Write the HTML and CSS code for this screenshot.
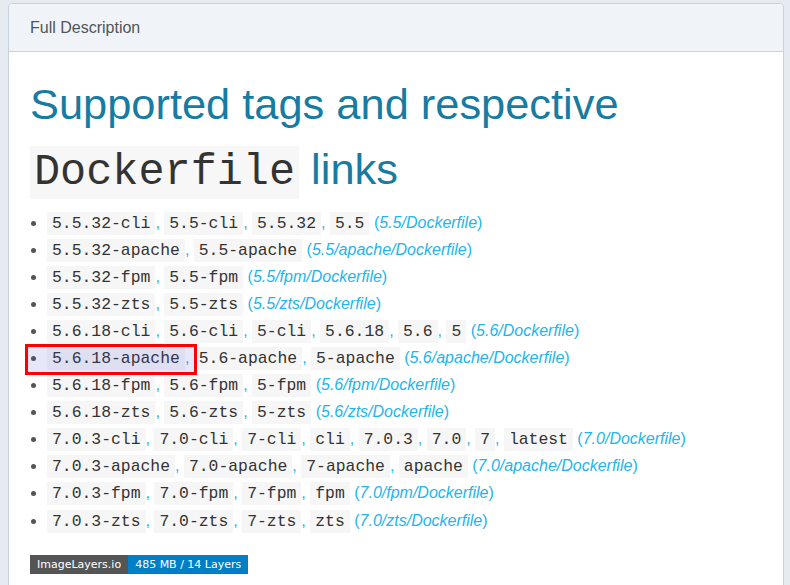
FILE: index.html
```html
<!DOCTYPE html>
<html>
<head>
<meta charset="utf-8">
<link rel="stylesheet" href="styles.css">
</head>
<body>
<div class="panel">
  <div class="panel-head">Full Description</div>
  <div class="panel-body">
    <h1 class="title">Supported tags and respective <code class="title-code">Dockerfile</code> links</h1>
    <ul class="tags">
      <li><a class="tag-link"><code>5.5.32-cli</code>, <code>5.5-cli</code>, <code>5.5.32</code>, <code>5.5</code> (<em>5.5/Dockerfile</em>)</a></li>
      <li><a class="tag-link"><code>5.5.32-apache</code>, <code>5.5-apache</code> (<em>5.5/apache/Dockerfile</em>)</a></li>
      <li><a class="tag-link"><code>5.5.32-fpm</code>, <code>5.5-fpm</code> (<em>5.5/fpm/Dockerfile</em>)</a></li>
      <li><a class="tag-link"><code>5.5.32-zts</code>, <code>5.5-zts</code> (<em>5.5/zts/Dockerfile</em>)</a></li>
      <li><a class="tag-link"><code>5.6.18-cli</code>, <code>5.6-cli</code>, <code>5-cli</code>, <code>5.6.18</code>, <code>5.6</code>, <code>5</code> (<em>5.6/Dockerfile</em>)</a></li>
      <li class="picked"><span class="pick-box"></span><a class="tag-link"><code>5.6.18-apache</code>, <code>5.6-apache</code>, <code>5-apache</code> (<em>5.6/apache/Dockerfile</em>)</a></li>
      <li><a class="tag-link"><code>5.6.18-fpm</code>, <code>5.6-fpm</code>, <code>5-fpm</code> (<em>5.6/fpm/Dockerfile</em>)</a></li>
      <li><a class="tag-link"><code>5.6.18-zts</code>, <code>5.6-zts</code>, <code>5-zts</code> (<em>5.6/zts/Dockerfile</em>)</a></li>
      <li><a class="tag-link"><code>7.0.3-cli</code>, <code>7.0-cli</code>, <code>7-cli</code>, <code>cli</code>, <code>7.0.3</code>, <code>7.0</code>, <code>7</code>, <code>latest</code> (<em>7.0/Dockerfile</em>)</a></li>
      <li><a class="tag-link"><code>7.0.3-apache</code>, <code>7.0-apache</code>, <code>7-apache</code>, <code>apache</code> (<em>7.0/apache/Dockerfile</em>)</a></li>
      <li><a class="tag-link"><code>7.0.3-fpm</code>, <code>7.0-fpm</code>, <code>7-fpm</code>, <code>fpm</code> (<em>7.0/fpm/Dockerfile</em>)</a></li>
      <li><a class="tag-link"><code>7.0.3-zts</code>, <code>7.0-zts</code>, <code>7-zts</code>, <code>zts</code> (<em>7.0/zts/Dockerfile</em>)</a></li>
    </ul>
    <div class="badge"><span class="badge-l">ImageLayers.io</span><span class="badge-r">485 MB / 14 Layers</span></div>
  </div>
</div>
</body>
</html>
```
FILE: styles.css
```css
html, body {
  margin: 0;
  padding: 0;
}
body {
  background: #e6ebf2;
  font-family: "Liberation Sans", Arial, sans-serif;
  font-size: 16px;
  color: #555;
  padding: 3px 6px 0 8px;
  height: 585px;
  box-sizing: border-box;
  overflow: hidden;
}
.panel {
  background: #fff;
  border: 1px solid #c8d2de;
  border-radius: 4px;
  min-height: 700px;
}
.panel-head {
  background: #f0f4f9;
  border-bottom: 1px solid #c8d2de;
  border-radius: 4px 4px 0 0;
  height: 47px;
  padding: 0 21px;
  display: flex;
  align-items: center;
  color: #505558;
}
.panel-body {
  padding: 20px 21px;
}
.title {
  margin: 0 0 7px;
  font-size: 43.4px;
  line-height: 65px;
  font-weight: normal;
  color: #177ca1;
}
.title-code {
  font-family: "Liberation Mono", monospace;
  font-size: 43.5px;
  line-height: 1;
  background: #f7f7f7;
  color: #333;
  padding: 2px 4px;
}
.tags {
  margin: 0 0 20px;
  padding-left: 17px;
}
.tags li {
  line-height: 27.05px;
  height: 27.05px;
  position: relative;
}
.tag-link {
  color: #22b5ea;
}
.tag-link code {
  font-family: "Liberation Mono", monospace;
  font-size: 16.4px;
  line-height: 1;
  background: #f6f6f6;
  color: #333;
  padding: 2px 5px;
}
.tag-link em {
  font-style: italic;
}
.pick-box {
  position: absolute;
  left: -22px;
  top: 0;
  width: 172px;
  height: 31px;
  box-sizing: border-box;
  border: 3px solid #f00;
  background: rgba(70, 70, 220, 0.13);
  z-index: 2;
}
.badge {
  display: inline-flex;
  font-family: "DejaVu Sans", sans-serif;
  font-size: 11px;
  line-height: 19px;
  color: #fff;
}
.badge-l {
  background: #555;
  padding: 0 7px;
}
.badge-r {
  background: #007ec6;
  padding: 0 7px;
}
```
